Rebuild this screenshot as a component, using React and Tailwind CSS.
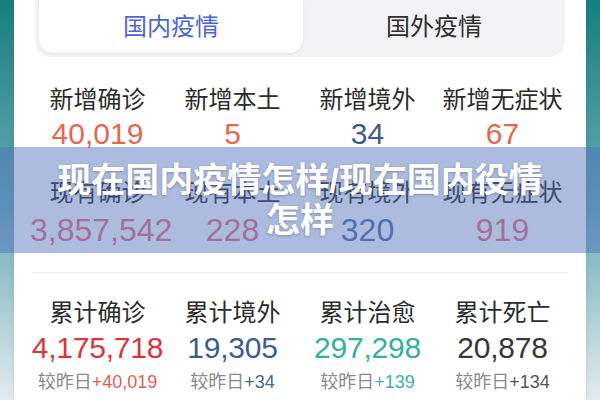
const font = "font-['Liberation_Sans','Noto_Sans_CJK_SC',sans-serif]";

const today = [
  { label: "新增确诊", value: "40,019", color: "text-[#e4684f]" },
  { label: "新增本土", value: "5", color: "text-[#e4684f]" },
  { label: "新增境外", value: "34", color: "text-[#3e5c86]" },
  { label: "新增无症状", value: "67", color: "text-[#e4684f]" },
];

const current = [
  { label: "现有确诊", value: "3,857,542", color: "text-[#e9717e]" },
  { label: "现有本土", value: "228", color: "text-[#e9717e]" },
  { label: "现有境外", value: "320", color: "text-[#4f6fa8]" },
  { label: "现有无症状", value: "919", color: "text-[#e9717e]" },
];

const total = [
  { label: "累计确诊", value: "4,175,718", diff: "+40,019", color: "text-[#d9363b]", diffColor: "text-[#e0614f]" },
  { label: "累计境外", value: "19,305", diff: "+34", color: "text-[#3d5b8e]", diffColor: "text-[#4a6590]" },
  { label: "累计治愈", value: "297,298", diff: "+139", color: "text-[#36aea0]", diffColor: "text-[#3fb0a2]" },
  { label: "累计死亡", value: "20,878", diff: "+134", color: "text-[#383838]", diffColor: "text-[#555555]" },
];

function LabelRow({ items, className }) {
  return (
    <div className={`grid grid-cols-4 h-[30px] items-center ${className}`}>
      {items.map((it) => (
        <div key={it.label} className="text-center text-[24px] leading-none text-[#2c2c2c]">
          {it.label}
        </div>
      ))}
    </div>
  );
}

function ValueRow({ items, size, className }) {
  return (
    <div className={`grid grid-cols-4 h-[34px] items-center ${className}`}>
      {items.map((it) => (
        <div key={it.label} className={`text-center leading-none ${size} ${it.color}`}>
          {it.value}
        </div>
      ))}
    </div>
  );
}

export default function App() {
  return (
    <div className={`relative w-[600px] h-[400px] overflow-hidden bg-gradient-to-b from-[#11807f] via-[#62a9b4] to-[#e3ebee] ${font}`}>
      <div className="mx-[14px] h-full bg-white px-[16px] shadow-[0_0_6px_rgba(0,0,0,0.08)]">
        {/* tab switcher */}
        <div className="mx-[5px] flex h-[57px] rounded-b-[16px] bg-[#f3f3f5] pl-[4px] pb-[4px]">
          <div className="flex w-[264px] items-center justify-center rounded-b-[14px] bg-white shadow-[0_1px_3px_rgba(0,0,0,0.08)] text-[24px] text-[#4d66cf]">
            国内疫情
          </div>
          <div className="flex flex-1 items-center justify-center text-[24px] text-[#2e2e2e]">
            国外疫情
          </div>
        </div>

        <LabelRow items={today} className="mt-[28px]" />
        <ValueRow items={today} size="text-[30px]" className="mt-[2px]" />

        <LabelRow items={current} className="mt-[27px]" />
        <ValueRow items={current} size="text-[32px]" className="mt-[5px]" />

        <div className="mx-[3px] mt-[25px] h-px bg-[#f0f0f0]" />

        <LabelRow items={total} className="mt-[25px]" />
        <ValueRow items={total} size="text-[30px] tracking-[-0.2px]" className="mt-[3px]" />
        <div className="mt-[6px] grid h-[22px] grid-cols-4 items-center">
          {total.map((it) => (
            <div key={it.label} className="text-center text-[18px] leading-none text-[#8a8a8a]">
              较昨日<span className={it.diffColor}>{it.diff}</span>
            </div>
          ))}
        </div>
      </div>

      {/* title banner */}
      <div className="absolute left-0 right-0 top-[147px] flex h-[106px] items-center justify-center bg-[rgba(84,112,188,0.48)]">
        <div className="w-[500px] text-center text-[34px] font-bold leading-[40px] text-white [text-shadow:0_1px_3px_rgba(0,0,0,0.25)]">
          现在国内疫情怎样/现在国内役情怎样
        </div>
      </div>
    </div>
  );
}
